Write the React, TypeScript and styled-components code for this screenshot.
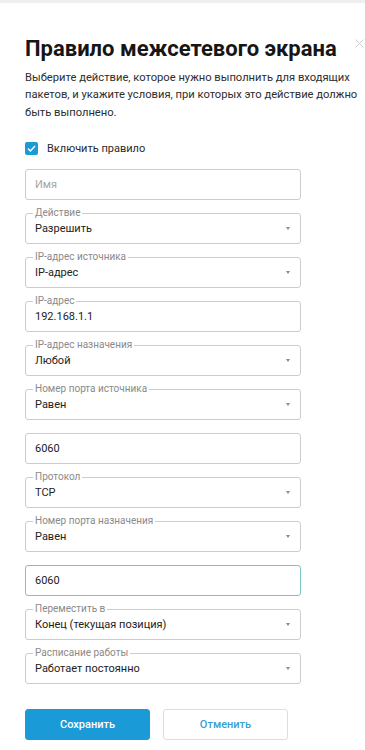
import React from "react";
import styled, { createGlobalStyle } from "styled-components";

const GlobalStyle = createGlobalStyle`
  html, body {
    margin: 0;
    padding: 0;
    background: #efefef;
  }
  body {
    font-family: Roboto, "Noto Sans", Arial, sans-serif;
    color: #222;
  }
`;

const Dialog = styled.section`
  position: relative;
  margin-top: 3px;
  min-height: 747px;
  box-sizing: border-box;
  padding: 32px 5px 0 25px;
  background: #fff;
`;

const CloseBtn = styled.button`
  position: absolute;
  top: 35px;
  right: 1px;
  width: 10px;
  height: 10px;
  padding: 0;
  border: 0;
  background: transparent;
  display: flex;
  align-items: center;
  justify-content: center;
`;

const Title = styled.h1`
  margin: 0;
  font-size: 22px;
  line-height: 28px;
  font-weight: 700;
  color: #161616;
  white-space: nowrap;
`;

const Description = styled.p`
  margin: 6px 0 0;
  width: 335px;
  font-size: 11.2px;
  line-height: 17.3px;
  color: #2d2d2d;
`;

const CheckRow = styled.label`
  display: flex;
  align-items: center;
  gap: 9px;
  margin-top: 19px;
  font-size: 11px;
  line-height: 17px;
  color: #2a2a2a;
`;

const CheckBox = styled.span`
  display: flex;
  align-items: center;
  justify-content: center;
  width: 13px;
  height: 13px;
  border-radius: 2px;
  background: #1b9ad8;
`;

const Fields = styled.div`
  display: flex;
  flex-direction: column;
  gap: 13px;
  width: 276px;
  margin-top: 12px;
`;

const Field = styled.div<{ $focused?: boolean }>`
  position: relative;
  display: flex;
  align-items: center;
  height: 31px;
  box-sizing: border-box;
  padding: 0 9px;
  border: 1px solid ${(p) => (p.$focused ? "#78c4c9" : "#cdcdcd")};
  border-radius: 3px;
  background: #fff;
`;

const Legend = styled.span`
  position: absolute;
  top: -7px;
  left: 7px;
  padding: 0 2px;
  background: #fff;
  font-size: 10px;
  line-height: 11px;
  color: #8a8a8a;
`;

const Value = styled.span<{ $placeholder?: boolean }>`
  font-size: 11px;
  line-height: 15px;
  color: ${(p) => (p.$placeholder ? "#a5a5a5" : "#222")};
`;

const Arrow = styled.span`
  margin-left: auto;
  margin-right: 1px;
  width: 0;
  height: 0;
  border-left: 2.5px solid transparent;
  border-right: 2.5px solid transparent;
  border-top: 3px solid #8a8a8a;
`;

const Actions = styled.div`
  display: flex;
  gap: 13px;
  margin-top: 25px;
`;

const Button = styled.button<{ $primary?: boolean }>`
  width: 125px;
  height: 31px;
  padding: 0;
  border-radius: 3px;
  border: 1px solid ${(p) => (p.$primary ? "#1b9ad8" : "#dedede")};
  background: ${(p) => (p.$primary ? "#1b9ad8" : "#fff")};
  color: ${(p) => (p.$primary ? "#fff" : "#3a9fd2")};
  font-family: Roboto, "Noto Sans", Arial, sans-serif;
  font-size: 11px;
  font-weight: 500;
`;

type FieldDef = {
  label?: string;
  value: string;
  select?: boolean;
  placeholder?: boolean;
  focused?: boolean;
};

const fields: FieldDef[] = [
  { value: "Имя", placeholder: true },
  { label: "Действие", value: "Разрешить", select: true },
  { label: "IP-адрес источника", value: "IP-адрес", select: true },
  { label: "IP-адрес", value: "192.168.1.1" },
  { label: "IP-адрес назначения", value: "Любой", select: true },
  { label: "Номер порта источника", value: "Равен", select: true },
  { value: "6060" },
  { label: "Протокол", value: "TCP", select: true },
  { label: "Номер порта назначения", value: "Равен", select: true },
  { value: "6060", focused: true },
  { label: "Переместить в", value: "Конец (текущая позиция)", select: true },
  { label: "Расписание работы", value: "Работает постоянно", select: true },
];

const App: React.FC = () => {
  return (
    <>
      <GlobalStyle />
      <Dialog>
        <CloseBtn aria-label="Закрыть">
          <svg width="9" height="9" viewBox="0 0 9 9">
            <path d="M0.5 0.5L8.5 8.5M8.5 0.5L0.5 8.5" stroke="#cfcfcf" strokeWidth="1" />
          </svg>
        </CloseBtn>

        <Title>Правило межсетевого экрана</Title>
        <Description>
          Выберите действие, которое нужно выполнить для входящих пакетов, и укажите условия, при которых это
          действие должно быть выполнено.
        </Description>

        <CheckRow>
          <CheckBox>
            <svg width="9" height="7" viewBox="0 0 9 7">
              <path d="M1 3.6L3.4 6L8 1" fill="none" stroke="#fff" strokeWidth="1.4" />
            </svg>
          </CheckBox>
          Включить правило
        </CheckRow>

        <Fields>
          {fields.map((f, i) => (
            <Field key={i} $focused={f.focused}>
              {f.label && <Legend>{f.label}</Legend>}
              <Value $placeholder={f.placeholder}>{f.value}</Value>
              {f.select && <Arrow />}
            </Field>
          ))}
        </Fields>

        <Actions>
          <Button $primary>Сохранить</Button>
          <Button>Отменить</Button>
        </Actions>
      </Dialog>
    </>
  );
};

export default App;
